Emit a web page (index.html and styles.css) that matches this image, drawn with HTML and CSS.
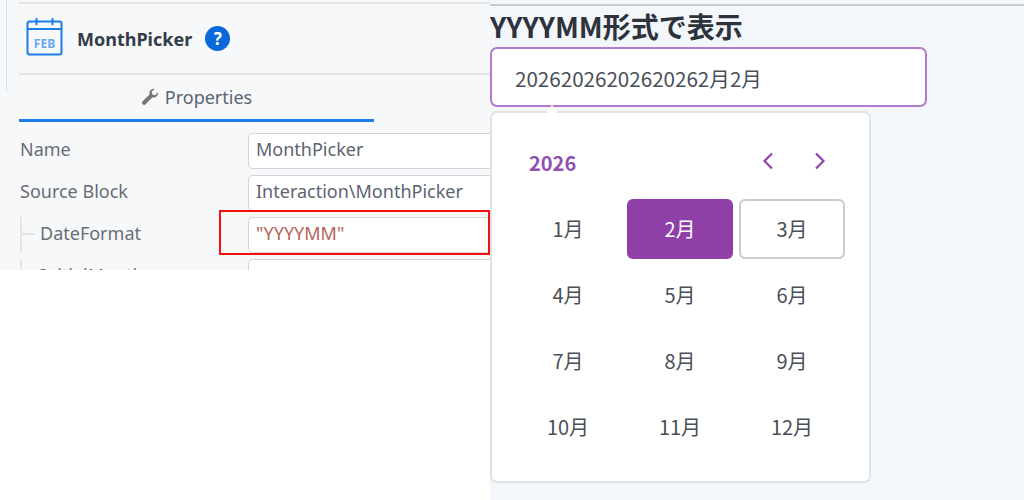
FILE: index.html
```html
<!DOCTYPE html>
<html lang="ja">
<head>
  <meta charset="UTF-8">
  <title>MonthPicker YYYYMM</title>
  <link rel="stylesheet" href="styles.css">
</head>
<body>
  <div class="shot">
    <div class="left">
      <div class="designer">
        <div class="side-strip"></div>
        <div class="inspector">
          <div class="block-head">
            <svg class="cal-icon" width="38" height="40" viewBox="0 0 38 40" fill="none">
              <rect x="1.5" y="4.5" width="34" height="33" rx="2" stroke="#1a7de8" stroke-width="2"/>
              <line x1="1.5" y1="12" x2="35.5" y2="12" stroke="#1a7de8" stroke-width="2"/>
              <line x1="10.5" y1="1" x2="10.5" y2="8" stroke="#1a7de8" stroke-width="2"/>
              <line x1="26.5" y1="1" x2="26.5" y2="8" stroke="#1a7de8" stroke-width="2"/>
              <text x="18.500" y="31" text-anchor="middle" class="cal-text">FEB</text>
            </svg>
            <span class="block-name">MonthPicker</span>
            <span class="help">?</span>
          </div>
          <div class="tabs">
            <div class="tab">
              <svg width="18" height="18" viewBox="0 0 18 18">
                <path d="M17 4.2c.3 1.8-.3 3.4-1.6 4.4-1.2 1-2.7 1.2-4.1.8L4.6 16.200c-.9.9-2.200.9-3 .1s-.8-2.100.1-3l6.800-6.800c-.4-1.400-.2-2.900.8-4.100C10.300 1.100 11.900.5 13.700.8l-3 3 .6 2.800 2.800.6z" fill="#777"/>
              </svg>
              Properties
            </div>
          </div>
          <div class="prop">
            <label>Name</label>
            <div class="field">MonthPicker</div>
          </div>
          <div class="prop">
            <label>Source Block</label>
            <div class="field">Interaction\MonthPicker</div>
          </div>
          <div class="prop">
            <label class="child">DateFormat</label>
            <div class="field string">"YYYYMM"</div>
          </div>
          <div class="prop">
            <label class="child">InitialMonth</label>
            <div class="field"></div>
          </div>
        </div>
        <div class="red-box"></div>
      </div>
    </div>

    <div class="right">
      <h2>YYYYMM形式で表示</h2>
      <div class="month-input">20262026202620262月2月</div>
      <div class="popover">
        <div class="pop-head">
          <span class="year">2026</span>
          <span class="arrows">
            <svg width="14" height="20" viewBox="0 0 14 20" fill="none"><path d="M11 2.500 3.500 10 11 17.500" stroke="#8e44ad" stroke-width="2.200"/></svg>
            <svg width="14" height="20" viewBox="0 0 14 20" fill="none"><path d="M3 2.500 10.500 10 3 17.500" stroke="#8e44ad" stroke-width="2.200"/></svg>
          </span>
        </div>
        <div class="months">
          <div class="month">1月</div>
          <div class="month selected">2月</div>
          <div class="month today">3月</div>
          <div class="month">4月</div>
          <div class="month">5月</div>
          <div class="month">6月</div>
          <div class="month">7月</div>
          <div class="month">8月</div>
          <div class="month">9月</div>
          <div class="month">10月</div>
          <div class="month">11月</div>
          <div class="month">12月</div>
        </div>
      </div>
    </div>
  </div>
</body>
</html>
```

FILE: styles.css
```css
* {
  box-sizing: border-box;
}
html, body {
  margin: 0;
  background: #fff;
}
.shot {
  display: flex;
  width: 1024px;
  height: 500px;
  overflow: hidden;
}
.left {
  width: 490px;
  flex-shrink: 0;
}
.designer {
  position: relative;
  display: flex;
  height: 270px;
  overflow: hidden;
  background: #f7f8fa;
  font-family: "Noto Sans", "Open Sans", sans-serif;
  font-size: 18px;
  color: #5b6470;
}
.side-strip {
  width: 7px;
  height: 92px;
  background: #f5f8fd;
  border-right: 1px solid #d5e1f2;
  flex-shrink: 0;
}
.inspector {
  flex: 1;
  margin-left: 12px;
  border-top: 2px solid #e4e5e7;
  margin-top: 2px;
  min-width: 0;
}
.block-head {
  display: flex;
  align-items: center;
  height: 71px;
  border-bottom: 2px solid #e4e5e7;
  padding-left: 7px;
}
.cal-icon {
  margin-bottom: 4px;
}
.cal-text {
  font-family: "Noto Sans", sans-serif;
  font-size: 12px;
  font-weight: 700;
  fill: #6aa9f0;
}
.block-name {
  margin-left: 13px;
  font-size: 18px;
  font-weight: 700;
  color: #333c48;
}
.help {
  display: flex;
  align-items: center;
  justify-content: center;
  width: 25px;
  height: 25px;
  margin-left: 13px;
  border-radius: 50%;
  background: #0a68d8;
  color: #fff;
  font-size: 17px;
  font-weight: 700;
}
.tabs {
  height: 47px;
  margin-bottom: 11px;
}
.tab {
  display: flex;
  align-items: center;
  justify-content: center;
  gap: 6px;
  width: 355px;
  height: 47px;
  border-bottom: 3px solid #1a7de8;
}
.prop {
  display: flex;
  height: 36px;
  margin-bottom: 6px;
}
.prop label {
  width: 228px;
  margin-left: 1px;
  flex-shrink: 0;
  line-height: 32px;
  color: #666e78;
}
.prop label.child {
  position: relative;
  padding-left: 20px;
}
.prop label.child::before {
  content: "";
  position: absolute;
  left: 0;
  top: 0;
  bottom: 1px;
  border-left: 2px solid #e4e5e7;
}
.prop label.child::after {
  content: "";
  position: absolute;
  left: 2px;
  top: 16px;
  width: 13px;
  border-top: 2px solid #e4e5e7;
}
.field {
  flex: 1;
  height: 36px;
  padding: 0 7px;
  background: #fff;
  border: 1px solid #d2d4d8;
  border-right: 0;
  border-radius: 5px 0 0 5px;
  line-height: 31px;
  color: #5b6470;
}
.field.string {
  color: #b5645a;
}
.red-box {
  position: absolute;
  left: 219px;
  top: 210px;
  width: 271px;
  height: 45px;
  border: 2px solid #f01010;
}
.right {
  flex: 1;
  padding-top: 5px;
  background: #f3f6fa;
  font-family: "Noto Sans CJK JP", "Noto Sans", sans-serif;
  color: #4a4f57;
  position: relative;
}
.right::before {
  content: "";
  position: absolute;
  left: 0;
  right: 0;
  top: 4px;
  border-top: 2px solid #c9c9c9;
}
.right h2 {
  margin: 0;
  height: 42px;
  font-size: 28px;
  font-weight: 700;
  line-height: 43px;
  color: #2d333b;
  white-space: nowrap;
}
.month-input {
  width: 437px;
  height: 60px;
  padding-left: 23px;
  background: #fff;
  border: 2px solid #b07ccb;
  border-radius: 7px;
  font-size: 20.600px;
  line-height: 59px;
}
.popover {
  position: relative;
  width: 381px;
  height: 372px;
  margin-top: 4px;
  padding: 0 23px;
  background: #fff;
  border: 2px solid #dfe3e8;
  border-radius: 7px;
}
.popover::before {
  content: "";
  position: absolute;
  left: 56px;
  top: -6px;
  width: 8px;
  height: 8px;
  background: #fff;
  transform: rotate(45deg);
}
.pop-head {
  display: flex;
  align-items: center;
  justify-content: space-between;
  height: 86px;
  padding: 12px 19px 0 14px;
}
.year {
  font-size: 20px;
  font-weight: 700;
  color: #9150b0;
}
.arrows {
  display: flex;
  gap: 38px;
  margin-top: -2px;
}
.months {
  display: grid;
  grid-template-columns: repeat(3, 106px);
  grid-auto-rows: 60px;
  gap: 6px;
}
.month {
  display: flex;
  align-items: center;
  justify-content: center;
  padding-bottom: 2px;
  font-size: 20px;
  border-radius: 6px;
}
.month.selected {
  background: #8e3fa8;
  color: #fff;
}
.month.today {
  border: 2px solid #c7ccd2;
}
```
